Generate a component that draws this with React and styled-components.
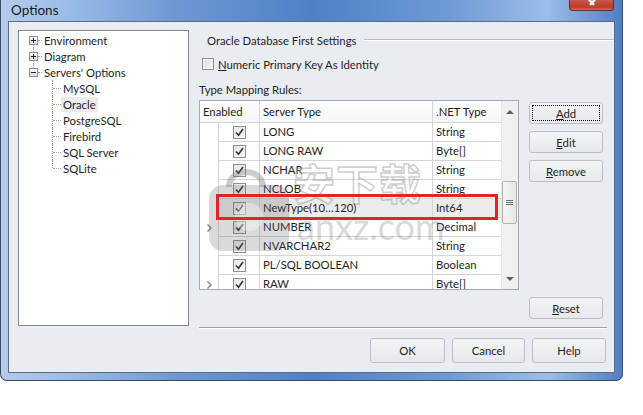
import React from 'react'
import styled, { createGlobalStyle } from 'styled-components'

const GlobalStyle = createGlobalStyle`
  html, body { margin: 0; padding: 0; background: #fff; }
  body {
    font-family: Lato, "Liberation Sans", sans-serif;
    font-size: 11.3px;
    color: #1e1e1e;
  }
`

const rules = [
  { type: 'LONG', net: 'String' },
  { type: 'LONG RAW', net: 'Byte[]' },
  { type: 'NCHAR', net: 'String' },
  { type: 'NCLOB', net: 'String' },
  { type: 'NewType(10…120)', net: 'Int64', selected: true },
  { type: 'NUMBER', net: 'Decimal', marker: true },
  { type: 'NVARCHAR2', net: 'String' },
  { type: 'PL/SQL BOOLEAN', net: 'Boolean' },
  { type: 'RAW', net: 'Byte[]', marker: true },
]

const tree = [
  { label: 'Environment', level: 0, exp: '+', down: true },
  { label: 'Diagram', level: 0, exp: '+', up: true, down: true },
  { label: "Servers' Options", level: 0, exp: '-', up: true },
  { label: 'MySQL', level: 1, up: true, down: true },
  { label: 'Oracle', level: 1, up: true, down: true, selected: true },
  { label: 'PostgreSQL', level: 1, up: true, down: true },
  { label: 'Firebird', level: 1, up: true, down: true },
  { label: 'SQL Server', level: 1, up: true, down: true },
  { label: 'SQLite', level: 1, up: true },
]

export default function App() {
  return (
    <>
      <GlobalStyle />
      <Window>
        <TitleBar>
          <Title>Options</Title>
          <CloseButton>
            <svg width="12" height="6" viewBox="0 0 12 6">
              <path d="M-2 -6 L8 5 M14 -6 L4 5" stroke="#fff" strokeWidth="2.4" fill="none" />
            </svg>
          </CloseButton>
        </TitleBar>
        <Client>
          <Tree>
            {tree.map((n) => (
              <TreeRow key={n.label}>
                {n.level === 0 ? (
                  <>
                    <ExpCell $up={n.up} $down={n.down}>
                      <Expander $minus={n.exp === '-'} />
                    </ExpCell>
                    <HDots $w={4} />
                  </>
                ) : (
                  <>
                    <Indent />
                    <ChildCell $up={n.up} $down={n.down} />
                  </>
                )}
                <TreeLabel $selected={n.selected}>{n.label}</TreeLabel>
              </TreeRow>
            ))}
          </Tree>

          <Pane>
            <GroupHeader>
              <GroupTitle>Oracle Database First Settings</GroupTitle>
              <Etched />
            </GroupHeader>

            <CheckRow>
              <BoxSmall />
              <span><u>N</u>umeric Primary Key As Identity</span>
            </CheckRow>

            <SectionLabel>Type Mapping Rules:</SectionLabel>

            <Middle>
              <Grid>
                <Table>
                  <HeadRow>
                    <HeadCell $w={60}>Enabled</HeadCell>
                    <HeadCell $w={173}>Server Type</HeadCell>
                    <HeadCell $w={68} $last>.NET Type</HeadCell>
                  </HeadRow>
                  {rules.map((r) => (
                    <Row key={r.type} $selected={r.selected}>
                      <Indicator>
                        {r.marker && (
                          <svg width="5" height="8" viewBox="0 0 5 8">
                            <path d="M0.5 0.5 L4 4 L0.5 7.5" stroke="#808080" strokeWidth="1.4" fill="none" />
                          </svg>
                        )}
                      </Indicator>
                      <CheckCell>
                        <CellBox>
                          <svg width="9" height="9" viewBox="0 0 9 9">
                            <path d="M1 4.5 L3.5 7.2 L8 1" stroke="#333" strokeWidth="1.6" fill="none" />
                          </svg>
                        </CellBox>
                      </CheckCell>
                      <Cell $w={173}>{r.type}</Cell>
                      <Cell $w={68} $last>{r.net}</Cell>
                    </Row>
                  ))}
                </Table>
                <ScrollBar>
                  <Arrow $up />
                  <Track>
                    <Thumb>
                      <Grip />
                    </Thumb>
                  </Track>
                  <Arrow />
                </ScrollBar>

                <Watermark>
                  <svg width="88" height="92" viewBox="0 0 88 92">
                    <path d="M24 26 C24 6 58 6 58 26" stroke="rgba(110,110,110,0.35)" strokeWidth="6" fill="none" />
                    <rect x="4" y="24" width="80" height="66" rx="14" fill="rgba(100,100,100,0.24)" />
                    <circle cx="44" cy="56" r="14" fill="rgba(255,255,255,0.35)" />
                  </svg>
                  <WmCn>安下载</WmCn>
                  <WmText>anxz.com</WmText>
                </Watermark>
                <Highlight />
              </Grid>

              <SideButtons>
                <Button $focus><u>A</u>dd</Button>
                <Button><u>E</u>dit</Button>
                <Button><u>R</u>emove</Button>
              </SideButtons>

              <span />
              <Button><u>R</u>eset</Button>
            </Middle>

            <Separator />

            <Footer>
              <FooterButton $w={75}>OK</FooterButton>
              <FooterButton $w={73}>Cancel</FooterButton>
              <FooterButton $w={74}>Help</FooterButton>
            </Footer>
          </Pane>
        </Client>
      </Window>
    </>
  )
}

const Window = styled.div`
  width: 623px;
  height: 381px;
  box-sizing: border-box;
  display: flex;
  flex-direction: column;
  padding: 0 7px 7px 7px;
  border: 1px solid #3a4a60;
  border-top: none;
  border-radius: 0 0 7px 7px;
  background: linear-gradient(90deg, #b3cbec 0%, #9dbde8 10%, #6e98d4 28%, #4f80c6 50%, #6d9ad6 72%, #9cbde8 88%, #4f7fc4 100%);
`

const TitleBar = styled.div`
  height: 21px;
  display: flex;
  align-items: flex-start;
  justify-content: space-between;
`

const Title = styled.div`
  padding: 1px 0 0 3px;
  font-size: 13.5px;
  line-height: 18px;
  color: #1b1b1b;
`

const CloseButton = styled.div`
  width: 45px;
  height: 11px;
  margin-right: 1px;
  box-sizing: border-box;
  border: 1px solid #6b2b22;
  border-top: none;
  border-radius: 0 0 4px 4px;
  background: linear-gradient(#c7564a, #c0392c 70%, #d26b5c);
  display: flex;
  justify-content: center;
  align-items: flex-start;
  overflow: hidden;
`

const Client = styled.div`
  flex: 1;
  display: flex;
  align-items: flex-start;
  background: #e9ecf0;
  border: 1px solid #5b6d84;
  padding: 8px 0 0 9px;
`

const Tree = styled.div`
  width: 171px;
  height: 296px;
  flex: none;
  box-sizing: border-box;
  border: 1px solid #828790;
  background: #fff;
  padding-top: 1px;
`

const TreeRow = styled.div`
  height: 16px;
  display: flex;
  align-items: center;
`

const ExpCell = styled.div`
  position: relative;
  width: 9px;
  height: 16px;
  margin-left: 10px;
  display: flex;
  align-items: center;
  &::before, &::after {
    content: '';
    position: absolute;
    left: 4px;
    border-left: 1px dotted #a0a0a0;
  }
  &::before { top: 0; height: ${(p) => (p.$up ? 4 : 0)}px; }
  &::after { bottom: 0; height: ${(p) => (p.$down ? 4 : 0)}px; }
`

const Expander = styled.div`
  position: relative;
  width: 9px;
  height: 9px;
  box-sizing: border-box;
  border: 1px solid #919191;
  background: linear-gradient(#fff, #dedede);
  &::before {
    content: '';
    position: absolute;
    left: 1px; top: 3px;
    width: 5px; height: 1px;
    background: #222;
  }
  &::after {
    content: '';
    position: absolute;
    left: 3px; top: 1px;
    width: 1px; height: 5px;
    background: #222;
    display: ${(p) => (p.$minus ? 'none' : 'block')};
  }
`

const HDots = styled.div`
  width: ${(p) => p.$w}px;
  border-top: 1px dotted #a0a0a0;
`

const Indent = styled.div`
  width: 29px;
`

const ChildCell = styled.div`
  position: relative;
  width: 13px;
  height: 16px;
  &::before {
    content: '';
    position: absolute;
    left: 4px;
    top: 0;
    height: ${(p) => (p.$down ? 16 : 8)}px;
    border-left: 1px dotted #a0a0a0;
  }
  &::after {
    content: '';
    position: absolute;
    left: 5px;
    top: 8px;
    width: 8px;
    border-top: 1px dotted #a0a0a0;
  }
`

const TreeLabel = styled.div`
  padding: 0 2px;
  line-height: 15px;
  background: ${(p) => (p.$selected ? '#ebebeb' : 'transparent')};
  white-space: nowrap;
`

const Pane = styled.div`
  flex: 1;
  margin-left: 10px;
  display: flex;
  flex-direction: column;
`

const GroupHeader = styled.div`
  margin-top: 3px;
  height: 14px;
  display: flex;
  align-items: center;
`

const GroupTitle = styled.div`
  padding-left: 8px;
  white-space: nowrap;
`

const Etched = styled.div`
  flex: 1;
  margin-left: 8px;
  border-top: 1px solid #b9bdc3;
  border-bottom: 1px solid #fff;
`

const CheckRow = styled.div`
  margin-top: 11px;
  height: 12px;
  display: flex;
  align-items: center;
  gap: 4px;
  padding-left: 3px;
`

const BoxSmall = styled.div`
  width: 12px;
  height: 12px;
  box-sizing: border-box;
  border: 1px solid #8e8f8f;
  background: linear-gradient(135deg, #dcdcdc, #f8f8f8);
  box-shadow: inset 0 0 0 1px #f4f4f4;
`

const SectionLabel = styled.div`
  margin-top: 12px;
  line-height: 16px;
`

const Middle = styled.div`
  margin-top: 2px;
  display: grid;
  grid-template-columns: 320px 74px;
  column-gap: 10px;
  row-gap: 7px;
  align-items: start;
`

const Grid = styled.div`
  position: relative;
  width: 320px;
  height: 190px;
  box-sizing: border-box;
  border: 1px solid #a3a9b1;
  background: #fff;
  display: flex;
  overflow: hidden;
`

const Table = styled.div`
  width: 301px;
  display: flex;
  flex-direction: column;
`

const HeadRow = styled.div`
  display: flex;
  height: 22px;
  flex: none;
  background: linear-gradient(#ffffff, #f4f5f7);
`

const HeadCell = styled.div`
  width: ${(p) => p.$w}px;
  box-sizing: border-box;
  padding-left: 3px;
  line-height: 21px;
  border-bottom: 1px solid #d5d5d5;
  border-right: ${(p) => (p.$last ? 'none' : '1px solid #d5d5d5')};
`

const Row = styled.div`
  display: flex;
  height: 19px;
  flex: none;
  background: ${(p) => (p.$selected ? '#ececec' : '#fff')};
`

const Indicator = styled.div`
  width: 18px;
  display: flex;
  align-items: center;
  justify-content: center;
  background: #fff;
`

const CheckCell = styled.div`
  width: 42px;
  box-sizing: border-box;
  border-left: 1px solid #d5d5d5;
  border-right: 1px solid #d5d5d5;
  border-bottom: 1px solid #d5d5d5;
  display: flex;
  align-items: center;
  justify-content: center;
`

const CellBox = styled.div`
  width: 13px;
  height: 13px;
  box-sizing: border-box;
  border: 1px solid #8e8f8f;
  background: linear-gradient(135deg, #e4e4e4, #fbfbfb);
  display: flex;
  align-items: center;
  justify-content: center;
`

const Cell = styled.div`
  width: ${(p) => p.$w}px;
  box-sizing: border-box;
  padding-left: 3px;
  line-height: 18px;
  white-space: nowrap;
  border-bottom: 1px solid #d5d5d5;
  border-right: ${(p) => (p.$last ? 'none' : '1px solid #d5d5d5')};
`

const ScrollBar = styled.div`
  width: 17px;
  display: flex;
  flex-direction: column;
  background: #f0f0f0;
  border-left: 1px solid #e6e6e6;
  box-sizing: border-box;
`

const Arrow = styled.div`
  height: 21px;
  flex: none;
  display: flex;
  align-items: center;
  justify-content: center;
  &::before {
    content: '';
    border-left: 4px solid transparent;
    border-right: 4px solid transparent;
    ${(p) => (p.$up ? 'border-bottom: 4px solid #606060;' : 'border-top: 4px solid #606060;')}
  }
`

const Track = styled.div`
  flex: 1;
  padding-top: 59px;
`

const Thumb = styled.div`
  width: 15px;
  height: 43px;
  box-sizing: border-box;
  border: 1px solid #b3b3b3;
  border-radius: 2px;
  background: linear-gradient(90deg, #f4f4f4, #e6e6e6);
  display: flex;
  align-items: center;
  justify-content: center;
`

const Grip = styled.div`
  width: 7px;
  height: 5px;
  background: repeating-linear-gradient(#707070 0 1px, transparent 1px 2px);
`

const Highlight = styled.div`
  position: absolute;
  left: 16px;
  top: 93px;
  width: 282px;
  height: 26px;
  box-sizing: border-box;
  border: 3px solid #e3222b;
  pointer-events: none;
`

const Watermark = styled.div`
  position: absolute;
  left: 5px;
  top: 60px;
  display: flex;
  align-items: flex-start;
  pointer-events: none;
`

const WmCn = styled.div`
  position: absolute;
  left: 88px;
  top: -3px;
  font-family: "Noto Sans CJK SC", sans-serif;
  font-weight: 700;
  font-size: 42px;
  line-height: 48px;
  letter-spacing: 1px;
  color: rgba(255, 255, 255, 0.25);
  -webkit-text-stroke: 1.5px rgba(110, 110, 110, 0.35);
  white-space: nowrap;
`

const WmText = styled.div`
  position: absolute;
  left: 92px;
  top: 45px;
  font-family: Lato, sans-serif;
  font-size: 36px;
  line-height: 40px;
  color: rgba(120, 120, 120, 0.3);
  white-space: nowrap;
`

const SideButtons = styled.div`
  margin-top: 2px;
  display: flex;
  flex-direction: column;
  gap: 7px;
`

const Button = styled.button`
  width: 74px;
  height: 22px;
  padding: 0;
  font-family: inherit;
  font-size: 11.3px;
  color: #1e1e1e;
  border: 1px solid #bcc0c6;
  border-radius: 3px;
  background: linear-gradient(#f3f4f6, #e6e8eb);
  outline: ${(p) => (p.$focus ? '1px dotted #000' : 'none')};
  outline-offset: -4px;
`

const Separator = styled.div`
  margin-top: 8px;
  margin-right: 7px;
  border-top: 1px solid #a0a0a0;
  border-bottom: 1px solid #fff;
`

const Footer = styled.div`
  margin-top: 9px;
  padding-right: 8px;
  display: flex;
  justify-content: flex-end;
  gap: 7px;
`

const FooterButton = styled(Button)`
  width: ${(p) => p.$w}px;
  height: 25px;
`
